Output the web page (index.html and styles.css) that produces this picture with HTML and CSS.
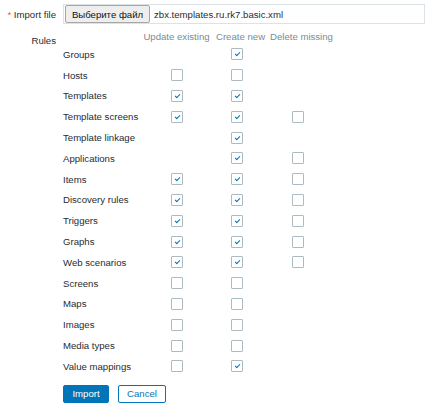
FILE: index.html
```html
<!DOCTYPE html>
<html>
<head>
<meta charset="utf-8">
<link rel="stylesheet" href="styles.css">
</head>
<body>
<div class="form">
  <div class="label import-label"><span class="req">*</span> Import file</div>
  <div class="field">
    <div class="file"><span class="filebtn">Выберите файл</span><span class="fname">zbx.templates.ru.rk7.basic.xml</span></div>
  </div>

  <div class="label rules-label">Rules</div>
  <div class="field">
    <div class="rules">
      <div class="hdr"></div>
      <div class="hdr">Update existing</div>
      <div class="hdr shift">Create new</div>
      <div class="hdr shift">Delete missing</div>

      <div class="name">Groups</div><div class="c"></div><div class="c"><span class="cb on"></span></div><div class="c"></div>
      <div class="name">Hosts</div><div class="c"><span class="cb"></span></div><div class="c"><span class="cb"></span></div><div class="c"></div>
      <div class="name">Templates</div><div class="c"><span class="cb on"></span></div><div class="c"><span class="cb on"></span></div><div class="c"></div>
      <div class="name">Template screens</div><div class="c"><span class="cb on"></span></div><div class="c"><span class="cb on"></span></div><div class="c"><span class="cb"></span></div>
      <div class="name">Template linkage</div><div class="c"></div><div class="c"><span class="cb on"></span></div><div class="c"></div>
      <div class="name">Applications</div><div class="c"></div><div class="c"><span class="cb on"></span></div><div class="c"><span class="cb"></span></div>
      <div class="name">Items</div><div class="c"><span class="cb on"></span></div><div class="c"><span class="cb on"></span></div><div class="c"><span class="cb"></span></div>
      <div class="name">Discovery rules</div><div class="c"><span class="cb on"></span></div><div class="c"><span class="cb on"></span></div><div class="c"><span class="cb"></span></div>
      <div class="name">Triggers</div><div class="c"><span class="cb on"></span></div><div class="c"><span class="cb on"></span></div><div class="c"><span class="cb"></span></div>
      <div class="name">Graphs</div><div class="c"><span class="cb on"></span></div><div class="c"><span class="cb on"></span></div><div class="c"><span class="cb"></span></div>
      <div class="name">Web scenarios</div><div class="c"><span class="cb on"></span></div><div class="c"><span class="cb on"></span></div><div class="c"><span class="cb"></span></div>
      <div class="name">Screens</div><div class="c"><span class="cb"></span></div><div class="c"><span class="cb"></span></div><div class="c"></div>
      <div class="name">Maps</div><div class="c"><span class="cb"></span></div><div class="c"><span class="cb"></span></div><div class="c"></div>
      <div class="name">Images</div><div class="c"><span class="cb"></span></div><div class="c"><span class="cb"></span></div><div class="c"></div>
      <div class="name">Media types</div><div class="c"><span class="cb"></span></div><div class="c"><span class="cb"></span></div><div class="c"></div>
      <div class="name">Value mappings</div><div class="c"><span class="cb"></span></div><div class="c"><span class="cb on"></span></div><div class="c"></div>
    </div>
  </div>

  <div class="label"></div>
  <div class="field buttons">
    <button class="btn primary">Import</button>
    <button class="btn secondary">Cancel</button>
  </div>
</div>
</body>
</html>
```

FILE: styles.css
```css
html, body {
  margin: 0;
  padding: 0;
  background: #ffffff;
}
body {
  font-family: "Liberation Sans", Arial, sans-serif;
  font-size: 9.6px;
  color: #1f2c33;
}
.form {
  display: grid;
  grid-template-columns: 56px 1fr;
  column-gap: 7px;
  padding: 4px 7px 0 0;
}
.label {
  text-align: right;
  line-height: 12px;
}
.import-label {
  padding-top: 4.5px;
}
.req {
  color: #e45959;
}
.rules-label {
  margin-top: 8px;
  padding-top: 3px;
}
.file {
  box-sizing: border-box;
  height: 20px;
  border: 1px solid #dce3e7;
  display: flex;
  align-items: center;
  padding-left: 1px;
}
.filebtn {
  box-sizing: border-box;
  height: 18px;
  width: 85px;
  display: flex;
  align-items: center;
  justify-content: center;
  background: #eeeeee;
  border: 1px solid #a6a6a6;
  border-radius: 2px;
  color: #111111;
  font-size: 9.6px;
}
.fname {
  padding-left: 4px;
  color: #1f2c33;
}
.rules {
  margin-top: 7.4px;
  display: grid;
  grid-template-columns: 80px 67px 54px 68px;
  grid-template-rows: 12.6px;
  grid-auto-rows: 20.8px;
}
.hdr {
  color: #768d99;
  text-align: center;
  white-space: nowrap;
  line-height: 12.6px;
}
.hdr.shift {
  padding-left: 6px;
}
.name {
  display: flex;
  align-items: center;
  white-space: nowrap;
}
.c {
  display: flex;
  align-items: center;
  justify-content: center;
}
.cb {
  box-sizing: border-box;
  width: 12px;
  height: 12px;
  border: 1px solid #acbbc2;
  border-radius: 1px;
  background: #ffffff;
  display: block;
}
.cb.on {
  position: relative;
}
.cb.on::after {
  content: "";
  position: absolute;
  left: 3px;
  top: 2px;
  width: 4px;
  height: 2px;
  border-left: 1.8px solid #0275b8;
  border-bottom: 1.8px solid #0275b8;
  transform: translate(0, 1px) rotate(-45deg);
  transform-origin: center;
}
.buttons {
  display: flex;
  gap: 9px;
  margin-top: 8px;
}
.btn {
  box-sizing: border-box;
  height: 18px;
  font-family: "Liberation Sans", Arial, sans-serif;
  font-size: 9.6px;
  border: 1px solid #0275b8;
  border-radius: 2px;
  padding: 0;
  margin: 0;
}
.btn.primary {
  width: 46px;
  background: #0275b8;
  color: #ffffff;
}
.btn.secondary {
  width: 48px;
  background: #ffffff;
  color: #0275b8;
}
```
